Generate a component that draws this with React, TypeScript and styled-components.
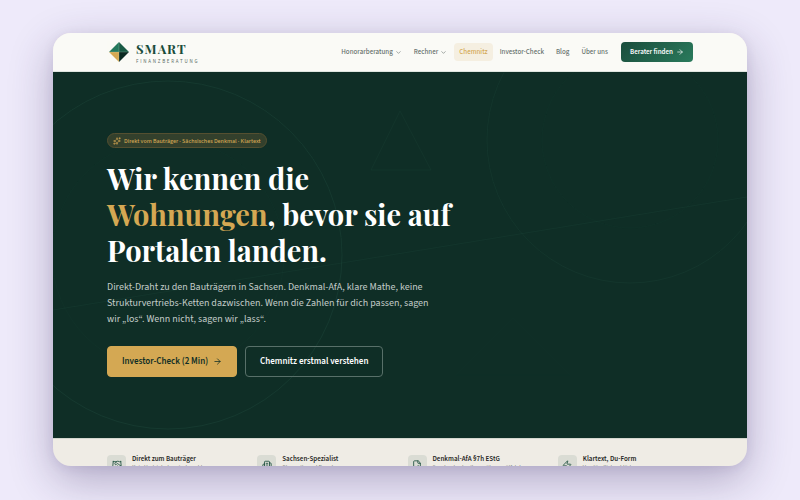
import React from "react";
import styled, { createGlobalStyle } from "styled-components";
import {
  ArrowRight,
  Building2,
  ChevronDown,
  FileCheck,
  Handshake,
  Sparkles,
  Zap,
} from "lucide-react";

const color = {
  forest: "#0f2e26",
  pine: "#1a4d3c",
  gold: "#d4a853",
  cream: "#fafaf6",
  sand: "#efece5",
};

const sans = `"Source Sans 3", "Source Sans Pro", "Noto Sans CJK KR", "Noto Sans", sans-serif`;
const serif = `"Playfair Display", "Liberation Serif", serif`;

const GlobalStyle = createGlobalStyle`
  *, *::before, *::after { box-sizing: border-box; }
  body { margin: 0; background: #eeeafa; font-family: ${sans}; }
  h1, p, h2, ul { margin: 0; padding: 0; }
  a { color: inherit; text-decoration: none; }
  button { font-family: inherit; cursor: pointer; }
`;

const Stage = styled.div`
  height: 100vh;
  padding: 33px 53px 34px;
  overflow: hidden;
`;

const Window = styled.div`
  height: 100%;
  overflow: hidden;
  border-radius: 18px;
  background: ${color.sand};
  box-shadow: 0 14px 44px rgba(50, 35, 90, 0.32), 0 2px 12px rgba(50, 35, 90, 0.08);
`;

const Header = styled.header`
  display: flex;
  align-items: center;
  justify-content: space-between;
  height: 39px;
  padding: 0 54px;
  background: ${color.cream};
  border-bottom: 1px solid #dfe5df;
`;

const Brand = styled.a`
  display: flex;
  align-items: center;
  gap: 6px;
`;

const BrandText = styled.span`
  display: flex;
  flex-direction: column;
  padding-top: 3px;
`;

const BrandName = styled.span`
  font: 700 13px/14px ${serif};
  letter-spacing: 1px;
  color: ${color.pine};
`;

const BrandSub = styled.span`
  margin-top: 2px;
  font-size: 5px;
  line-height: 8px;
  letter-spacing: 0.35em;
  color: #5c6f68;
`;

const Nav = styled.nav`
  display: flex;
  align-items: center;
  gap: 2px;
`;

const NavLink = styled.a<{ $active?: boolean }>`
  display: flex;
  align-items: center;
  gap: 2px;
  padding: 4px 5px;
  border-radius: 4px;
  font-size: 7px;
  line-height: 10px;
  font-weight: 500;
  white-space: nowrap;
  color: ${(p) => (p.$active ? color.gold : "#66706c")};
  background: ${(p) => (p.$active ? "#f5efe1" : "transparent")};
`;

const NavButton = styled.button`
  display: flex;
  align-items: center;
  gap: 3px;
  height: 20px;
  margin-left: 6px;
  padding: 0 9px;
  border: 0;
  border-radius: 4px;
  font-size: 7px;
  line-height: 10px;
  font-weight: 600;
  white-space: nowrap;
  color: #fff;
  background: linear-gradient(135deg, #1a4d3c, #2a7a5c);
`;

const Hero = styled.section`
  position: relative;
  padding: 61px 54px;
  background: ${color.forest};
`;

const Backdrop = styled.svg`
  position: absolute;
  inset: 0;
  width: 100%;
  height: 100%;
`;

const HeroContent = styled.div`
  position: relative;
  display: flex;
  flex-direction: column;
  align-items: flex-start;
`;

const Badge = styled.div`
  display: flex;
  align-items: center;
  gap: 3px;
  height: 15px;
  padding: 0 5px;
  border: 1px solid #544f30;
  border-radius: 8px;
  font-size: 6px;
  line-height: 8px;
  font-weight: 500;
  color: ${color.gold};
  background: #33402c;
`;

const Title = styled.h1`
  max-width: 380px;
  margin-top: 12px;
  font: 700 29px/36px ${serif};
  color: #fff;
`;

const Accent = styled.span`
  color: ${color.gold};
`;

const Lead = styled.p`
  max-width: 325px;
  margin-top: 11px;
  font-size: 10px;
  line-height: 16px;
  color: #c3ccc9;
`;

const Actions = styled.div`
  display: flex;
  gap: 8px;
  margin-top: 19px;
`;

const ActionButton = styled.button<{ $primary?: boolean }>`
  display: flex;
  align-items: center;
  gap: 5px;
  height: 31px;
  padding: 0 14px;
  border: 1px solid ${(p) => (p.$primary ? color.gold : "#587069")};
  border-radius: 4px;
  font-size: 9px;
  line-height: 12px;
  font-weight: 600;
  white-space: nowrap;
  color: ${(p) => (p.$primary ? color.forest : "#fff")};
  background: ${(p) => (p.$primary ? color.gold : "transparent")};
`;

const Features = styled.ul`
  display: grid;
  grid-template-columns: repeat(4, 1fr);
  gap: 15px;
  padding: 16px 54px;
  list-style: none;
  border-top: 1px solid #d3d8cf;
`;

const Feature = styled.li`
  display: flex;
  gap: 6px;
`;

const FeatureIcon = styled.span`
  display: flex;
  flex: none;
  align-items: center;
  justify-content: center;
  width: 19px;
  height: 19px;
  border-radius: 4px;
  color: ${color.pine};
  background: #dadcd4;
`;

const FeatureTitle = styled.h2`
  font-size: 7px;
  line-height: 8px;
  font-weight: 600;
  white-space: nowrap;
  color: #1f2624;
`;

const FeatureNote = styled.p`
  font-size: 6px;
  line-height: 8px;
  white-space: nowrap;
  color: #7a807c;
`;

const Logo = () => (
  <svg width="23" height="22" viewBox="0 0 23 22" aria-hidden="true">
    <path d="M12 1V11H2Z" fill="#24795d" />
    <path d="M12 1L22 11H12Z" fill="#1a5a45" />
    <path d="M2 11H12V21Z" fill="#d4a853" />
    <path d="M12 11H22L12 21Z" fill="#0c2a22" />
    <path d="M2 11H22M12 1V21" stroke="#cfe0d2" strokeWidth="0.6" opacity="0.4" />
  </svg>
);

const features = [
  { icon: Handshake, title: "Direkt zum Bauträger", note: "Kein Vertrieb dazwischen, klar" },
  { icon: Building2, title: "Sachsen-Spezialist", note: "Chemnitz und Dresden" },
  { icon: FileCheck, title: "Denkmal-AfA §7h EStG", note: "Sonderabschreibung über zwölf Jahre" },
  { icon: Zap, title: "Klartext, Du-Form", note: "Verständlich erklärt" },
];

export default function App() {
  return (
    <>
      <GlobalStyle />
      <Stage>
        <Window>
          <Header>
            <Brand href="#">
              <Logo />
              <BrandText>
                <BrandName>SMART</BrandName>
                <BrandSub>FINANZBERATUNG</BrandSub>
              </BrandText>
            </Brand>
            <Nav>
              <NavLink href="#">
                Honorarberatung <ChevronDown size={7} />
              </NavLink>
              <NavLink href="#">
                Rechner <ChevronDown size={7} />
              </NavLink>
              <NavLink href="#" $active>
                Chemnitz
              </NavLink>
              <NavLink href="#">Investor-Check</NavLink>
              <NavLink href="#">Blog</NavLink>
              <NavLink href="#">Über uns</NavLink>
              <NavButton type="button">
                Berater finden <ArrowRight size={8} />
              </NavButton>
            </Nav>
          </Header>
          <Hero>
            <Backdrop
              viewBox="0 0 694 366"
              preserveAspectRatio="xMidYMid slice"
              fill="none"
              stroke="#3a7a62"
              aria-hidden="true"
            >
              <circle cx="115" cy="183" r="174" opacity="0.15" />
              <circle cx="115" cy="183" r="116" opacity="0.04" />
              <circle cx="577" cy="68" r="143" opacity="0.1" />
              <circle cx="577" cy="68" r="88" opacity="0.04" />
              <path d="M347 39L378 98H318Z" opacity="0.08" />
              <path d="M460 246L517 303H403Z" opacity="0.02" />
              <path d="M0 238L694 125" opacity="0.1" />
            </Backdrop>
            <HeroContent>
              <Badge>
                <Sparkles size={8} />
                Direkt vom Bauträger · Sächsisches Denkmal · Klartext
              </Badge>
              <Title>
                Wir kennen die
                <br />
                <Accent>Wohnungen</Accent>, bevor sie auf
                <br />
                Portalen landen.
              </Title>
              <Lead>
                Direkt-Draht zu den Bauträgern in Sachsen. Denkmal-AfA, klare Mathe, keine
                Strukturvertriebs-Ketten dazwischen. Wenn die Zahlen für dich passen, sagen
                wir „los“. Wenn nicht, sagen wir „lass“.
              </Lead>
              <Actions>
                <ActionButton type="button" $primary>
                  Investor-Check (2 Min) <ArrowRight size={9} />
                </ActionButton>
                <ActionButton type="button">Chemnitz erstmal verstehen</ActionButton>
              </Actions>
            </HeroContent>
          </Hero>
          <Features>
            {features.map(({ icon: Icon, title, note }) => (
              <Feature key={title}>
                <FeatureIcon>
                  <Icon size={10} />
                </FeatureIcon>
                <div>
                  <FeatureTitle>{title}</FeatureTitle>
                  <FeatureNote>{note}</FeatureNote>
                </div>
              </Feature>
            ))}
          </Features>
        </Window>
      </Stage>
    </>
  );
}
